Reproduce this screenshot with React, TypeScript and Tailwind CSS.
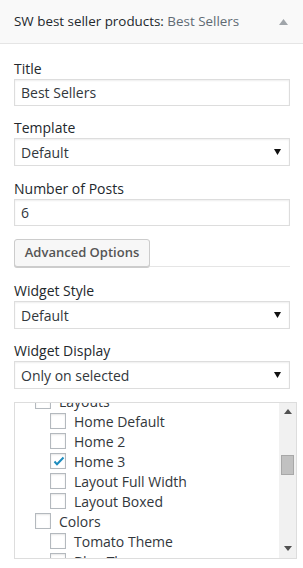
import type { ReactNode } from "react";

const font = { fontFamily: '"Open Sans", "Liberation Sans", sans-serif' };

function Label({ children }: { children: ReactNode }) {
  return <div className="h-[20px] text-[14px] leading-[20px] text-[#23282d]">{children}</div>;
}

function TextInput({ value }: { value: string }) {
  return (
    <div className="flex h-[27px] w-[276px] items-center border border-[#dddddd] bg-white px-[6px] text-[14px] text-[#32373c] shadow-[inset_0_1px_2px_rgba(0,0,0,0.07)]">
      {value}
    </div>
  );
}

function SelectBox({ value }: { value: string }) {
  return (
    <div className="flex h-[28px] w-[276px] items-center justify-between border border-[#dddddd] bg-white pl-[6px] pr-[8px] text-[14px] text-[#32373c] shadow-[inset_0_1px_2px_rgba(0,0,0,0.07)]">
      <span>{value}</span>
      <svg width="7" height="6" viewBox="0 0 7 6">
        <path d="M0 0h7L3.5 6z" fill="#111" />
      </svg>
    </div>
  );
}

function Check({ checked }: { checked?: boolean }) {
  return (
    <span className="relative flex h-[16px] w-[16px] shrink-0 items-center justify-center border border-[#b4b9be] bg-white shadow-[inset_0_1px_2px_rgba(0,0,0,0.1)]">
      {checked ? (
        <svg width="14" height="12" viewBox="0 0 14 12" className="absolute left-[1px] top-[1px]">
          <path d="M2.5 6.5l2.5 2.8L11.5 2.5" fill="none" stroke="#1e8cbe" strokeWidth="2" />
        </svg>
      ) : null}
    </span>
  );
}

const items = [
  { label: "Layouts", depth: 0 },
  { label: "Home Default", depth: 1 },
  { label: "Home 2", depth: 1 },
  { label: "Home 3", depth: 1, checked: true },
  { label: "Layout Full Width", depth: 1 },
  { label: "Layout Boxed", depth: 1 },
  { label: "Colors", depth: 0 },
  { label: "Tomato Theme", depth: 1 },
  { label: "Blue Theme", depth: 1 },
];

export default function App() {
  return (
    <div className="h-[568px] w-[303px] overflow-hidden bg-white" style={font}>
      <div className="flex h-[44px] items-center justify-between border-b border-[#e5e5e5] bg-[#f9f9f9] pl-[14px] pr-[15px]">
        <div className="text-[13.4px] text-[#23282d]">
          SW best seller products: <span className="text-[#606a73]">Best Sellers</span>
        </div>
        <svg width="9" height="6" viewBox="0 0 9 6">
          <path d="M0 6L4.5 0 9 6z" fill="#a0a5aa" />
        </svg>
      </div>

      <div className="pl-[14px] pt-[15px]">
        <Label>Title</Label>
        <TextInput value="Best Sellers" />

        <div className="mt-[12px]">
          <Label>Template</Label>
          <SelectBox value="Default" />
        </div>

        <div className="mt-[13px]">
          <Label>Number of Posts</Label>
          <TextInput value="6" />
        </div>

        <div className="mt-[13px] flex w-[276px] items-end">
          <div className="flex h-[28px] w-[136px] items-center justify-center rounded-[3px] border border-[#cccccc] bg-[#f7f7f7] text-[13px] font-semibold text-[#555555] shadow-[0_1px_0_#cccccc]">
            Advanced Options
          </div>
          <div className="flex-1 border-b border-[#e5e5e5]" />
        </div>

        <div className="mt-[14px]">
          <Label>Widget Style</Label>
          <SelectBox value="Default" />
        </div>

        <div className="mt-[12px]">
          <Label>Widget Display</Label>
          <SelectBox value="Only on selected" />
        </div>

        <div className="mt-[13px] flex h-[157px] w-[283px] border border-[#dddddd] bg-white">
          <div className="flex-1 overflow-hidden">
            <div className="-mt-[12px] pl-[20px]">
              {items.map((item) => (
                <div
                  key={item.label}
                  className={`flex h-[20px] items-center gap-[8px] text-[14px] text-[#32373c] ${item.depth ? "pl-[15px]" : ""}`}
                >
                  <Check checked={item.checked} />
                  <span>{item.label}</span>
                </div>
              ))}
            </div>
          </div>
          <div className="flex w-[17px] flex-col items-center bg-[#f1f1f1]">
            <svg width="8" height="5" viewBox="0 0 8 5" className="mt-[6px]">
              <path d="M0 5L4 0 8 5z" fill="#505050" />
            </svg>
            <div className="mt-[41px] h-[20px] w-[13px] border border-[#a8a8a8] bg-[#c1c1c1]" />
            <div className="flex-1" />
            <svg width="8" height="5" viewBox="0 0 8 5" className="mb-[7px]">
              <path d="M0 0h8L4 5z" fill="#505050" />
            </svg>
          </div>
        </div>
      </div>
    </div>
  );
}
